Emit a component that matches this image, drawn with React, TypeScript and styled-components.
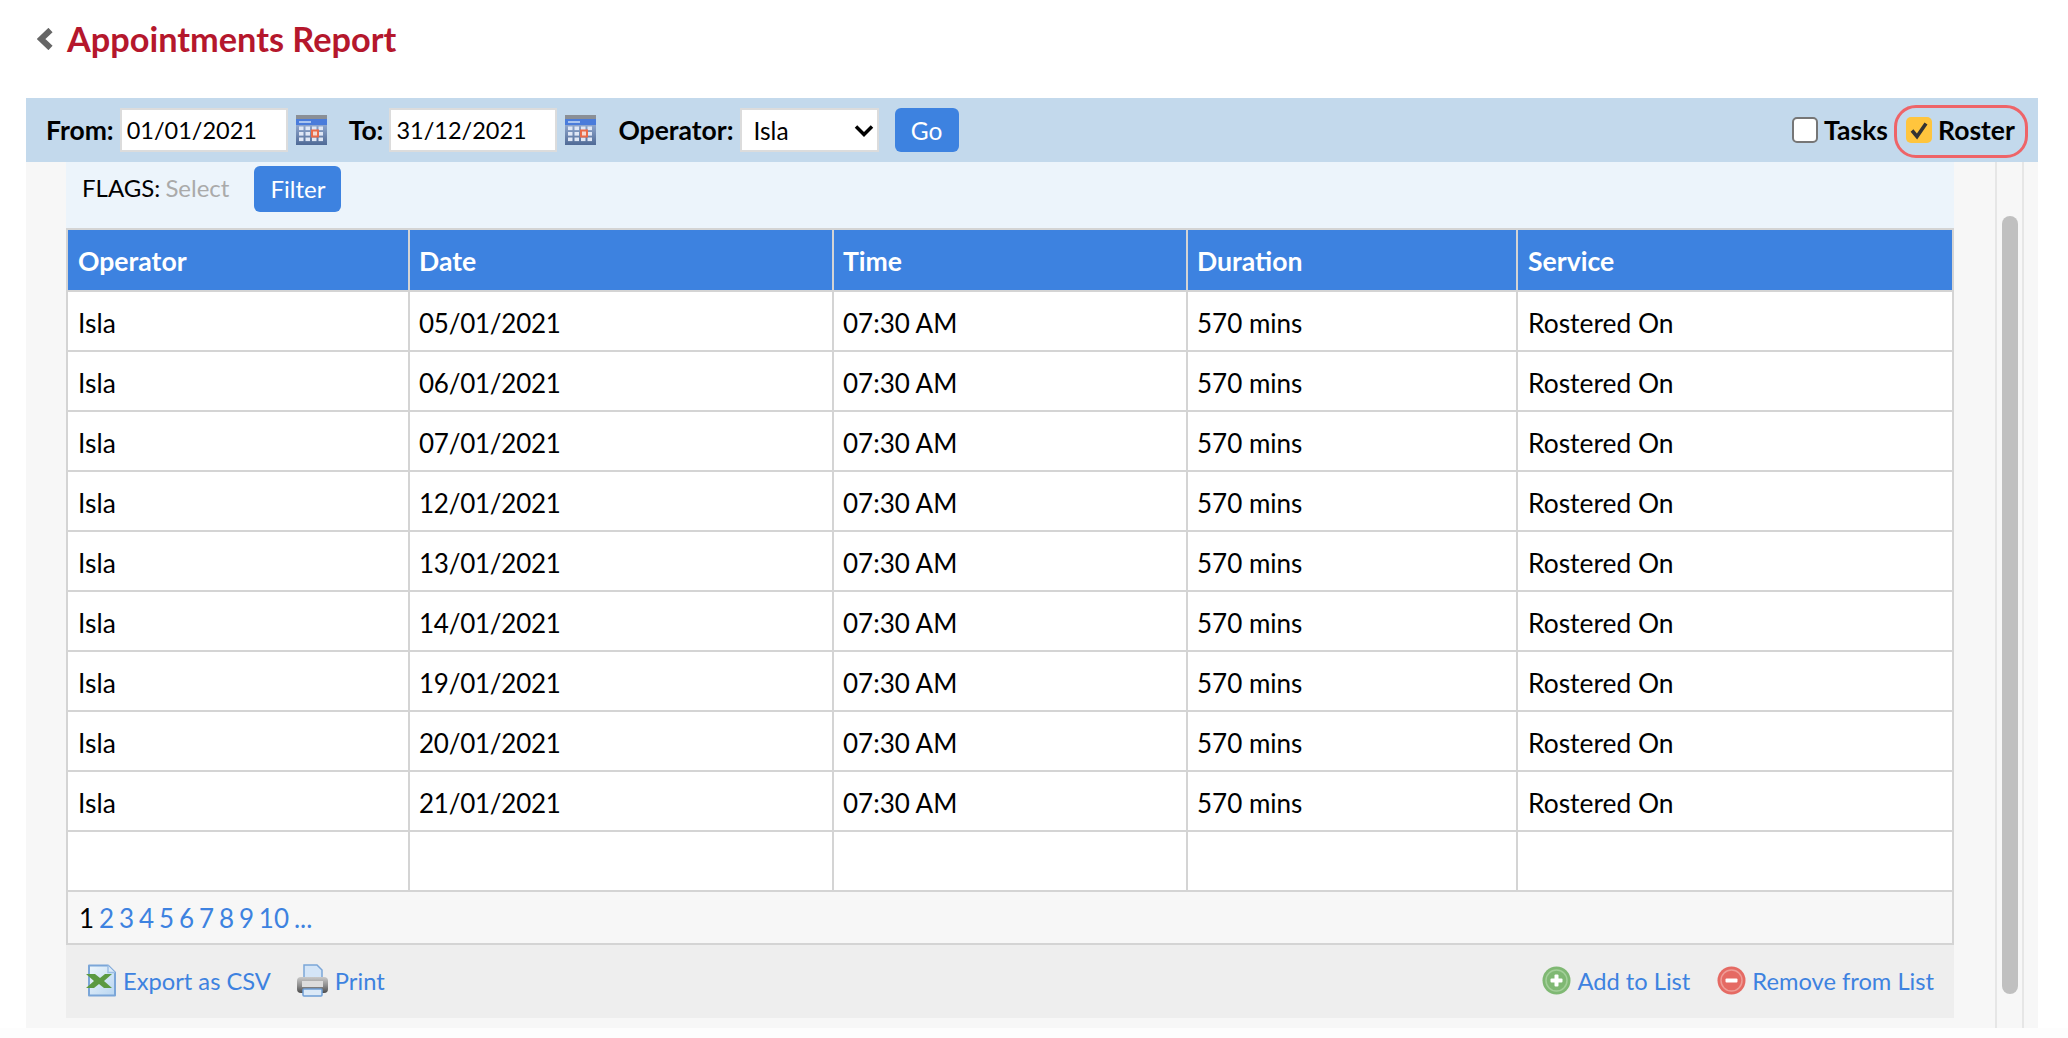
import React from "react";
import styled, { createGlobalStyle } from "styled-components";

const rows = [
  "05/01/2021",
  "06/01/2021",
  "07/01/2021",
  "12/01/2021",
  "13/01/2021",
  "14/01/2021",
  "19/01/2021",
  "20/01/2021",
  "21/01/2021",
];

const pages = ["2", "3", "4", "5", "6", "7", "8", "9", "10", "..."];

const CalendarIcon: React.FC = () => (
  <svg width="33" height="31" viewBox="0 0 33 31">
    <defs>
      <linearGradient id="calBody" x1="0" y1="0" x2="0" y2="1">
        <stop offset="0" stopColor="#a5bbdf" />
        <stop offset="1" stopColor="#4f6a96" />
      </linearGradient>
    </defs>
    <rect x="1" y="3" width="31" height="27" fill="url(#calBody)" />
    <rect x="1" y="0" width="31" height="4" fill="#8a8f96" />
    <rect x="1" y="4" width="31" height="6" fill="#4a7cdb" />
    <rect x="4" y="6" width="12" height="2" fill="#a9c4ef" />
    {[11.5, 17, 22.5].map((y) =>
      [4, 10.5, 17, 23.5].map((x) => (
        <rect key={`${x}-${y}`} x={x} y={y} width="4.5" height="3.6" fill="#dfe7f5" />
      ))
    )}
    <rect x="17" y="15.5" width="6" height="6" fill="#f4d8d0" stroke="#ea6a48" strokeWidth="2" />
  </svg>
);

const ExcelIcon: React.FC = () => (
  <svg width="31" height="33" viewBox="0 0 31 33">
    <defs>
      <linearGradient id="xlsDoc" x1="0" y1="0" x2="1" y2="1">
        <stop offset="0" stopColor="#eef6fc" />
        <stop offset="1" stopColor="#b9d6f1" />
      </linearGradient>
    </defs>
    <path
      d="M3 1.5h19l7 7v23H3z"
      fill="url(#xlsDoc)"
      stroke="#7ba6d8"
      strokeWidth="2"
      strokeLinejoin="round"
    />
    <path d="M22 1.5v7h7" fill="#dbeaf8" stroke="#9dbfe4" strokeWidth="1.5" />
    <path d="M0 10h9l5 4 5-4h7l-8 7 8 7h-8l-5-4-5 4H0l8-7z" fill="#5c9a42" />
  </svg>
);

const PrinterIcon: React.FC = () => (
  <svg width="33" height="33" viewBox="0 0 33 33">
    <defs>
      <linearGradient id="prnBody" x1="0" y1="0" x2="0" y2="1">
        <stop offset="0" stopColor="#c9c9c9" />
        <stop offset="0.55" stopColor="#8c8c8c" />
        <stop offset="1" stopColor="#4b4b4b" />
      </linearGradient>
    </defs>
    <path d="M8 16V1h13l5 5v10z" fill="#d4e5f7" stroke="#7ba6d8" strokeWidth="1.5" />
    <rect x="1" y="13" width="31" height="16" rx="4" fill="url(#prnBody)" />
    <rect x="6" y="17" width="21" height="6" fill="#dcdcdc" />
    <rect x="7" y="25" width="19" height="7" rx="1" fill="#dbe9f7" stroke="#6f9fd6" strokeWidth="1.5" />
  </svg>
);

const RoundIcon: React.FC<{ tone: "add" | "remove" }> = ({ tone }) => {
  const outer = tone === "add" ? "#7fb873" : "#e56a63";
  const rim = tone === "add" ? "#a3cf99" : "#ee9c96";
  return (
    <svg width="29" height="29" viewBox="0 0 29 29">
      <circle cx="14.5" cy="14.5" r="14" fill={outer} />
      <circle cx="14.5" cy="14.5" r="10.5" fill="none" stroke={rim} strokeWidth="1.5" />
      <rect x="8.5" y="12.5" width="12" height="4" rx="1" fill="#fff" />
      {tone === "add" && <rect x="12.5" y="8.5" width="4" height="12" rx="1" fill="#fff" />}
    </svg>
  );
};

const App: React.FC = () => (
  <Page>
    <GlobalStyle />
    <TitleRow>
      <BackIcon width="16" height="22" viewBox="0 0 16 22">
        <path d="M13.5 2 4 11l9.5 9" fill="none" stroke="#666" strokeWidth="6" />
      </BackIcon>
      <Title>Appointments Report</Title>
    </TitleRow>

    <Toolbar>
      <FieldLabel>From:</FieldLabel>
      <DateInput defaultValue="01/01/2021" />
      <CalendarSlot>
        <CalendarIcon />
      </CalendarSlot>
      <FieldLabel>To:</FieldLabel>
      <DateInput defaultValue="31/12/2021" />
      <CalendarSlot>
        <CalendarIcon />
      </CalendarSlot>
      <FieldLabel>Operator:</FieldLabel>
      <SelectWrap>
        <OperatorSelect defaultValue="Isla">
          <option>Isla</option>
        </OperatorSelect>
        <SelectArrow width="20" height="13" viewBox="0 0 20 13">
          <path d="M2 2.5 10 10.5l8-8" fill="none" stroke="#000" strokeWidth="3.5" />
        </SelectArrow>
      </SelectWrap>
      <GoButton>Go</GoButton>
      <ToolbarRight>
        <CheckLabel>
          <CheckBox type="checkbox" />
          Tasks
        </CheckLabel>
        <RosterRing>
          <CheckLabel>
            <CheckBox type="checkbox" defaultChecked />
            Roster
          </CheckLabel>
        </RosterRing>
      </ToolbarRight>
    </Toolbar>

    <Body>
      <Main>
        <FlagsBar>
          <FlagsLabel>
            FLAGS: <span>Select</span>
          </FlagsLabel>
          <FilterButton>Filter</FilterButton>
        </FlagsBar>
        <ReportTable>
          <colgroup>
            <col style={{ width: 342 }} />
            <col style={{ width: 424 }} />
            <col style={{ width: 354 }} />
            <col style={{ width: 330 }} />
            <col />
          </colgroup>
          <thead>
            <tr>
              <th>Operator</th>
              <th>Date</th>
              <th>Time</th>
              <th>Duration</th>
              <th>Service</th>
            </tr>
          </thead>
          <tbody>
            {rows.map((date) => (
              <tr key={date}>
                <td>Isla</td>
                <td>{date}</td>
                <td>07:30 AM</td>
                <td>570 mins</td>
                <td>Rostered On</td>
              </tr>
            ))}
            <tr>
              <td />
              <td />
              <td />
              <td />
              <td />
            </tr>
          </tbody>
        </ReportTable>
        <Pager>
          <b>1</b>
          {pages.map((p) => (
            <PageLink key={p}>{p}</PageLink>
          ))}
        </Pager>
        <Footer>
          <FooterLink>
            <ExcelIcon />
            Export as CSV
          </FooterLink>
          <FooterLink>
            <PrinterIcon />
            Print
          </FooterLink>
          <FooterRight>
            <FooterLink>
              <RoundIcon tone="add" />
              Add to List
            </FooterLink>
            <FooterLink>
              <RoundIcon tone="remove" />
              Remove from List
            </FooterLink>
          </FooterRight>
        </Footer>
      </Main>
      <ScrollRail>
        <ScrollThumb />
      </ScrollRail>
    </Body>
  </Page>
);

const GlobalStyle = createGlobalStyle`
  html, body {
    margin: 0;
    padding: 0;
    background: #fdfdfd;
    overflow: hidden;
  }
  * {
    box-sizing: border-box;
  }
  body {
    font-family: Lato, "Open Sans", sans-serif;
    color: #000;
  }
`;

const Page = styled.div`
  width: 2068px;
  height: 1038px;
  padding: 0 30px 0 26px;
  background: linear-gradient(#fff 1028px, #fdfdfd 1028px);
`;

const TitleRow = styled.div`
  height: 98px;
  padding: 0 0 21px 11px;
  display: flex;
  align-items: center;
  gap: 14px;
`;

const BackIcon = styled.svg`
  flex: none;
`;

const Title = styled.h1`
  margin: 0;
  font-size: 34.3px;
  font-weight: 700;
  color: #b5172c;
`;

const Toolbar = styled.div`
  height: 64px;
  padding: 0 10px 0 20px;
  background: #c3d9ec;
  display: flex;
  align-items: center;
`;

const FieldLabel = styled.label`
  font-size: 26.5px;
  font-weight: 700;
  margin-right: 6px;
`;

const DateInput = styled.input`
  width: 168px;
  height: 44px;
  padding: 0 5px;
  border: 2px solid #dcdcdc;
  background: #fff;
  font-family: inherit;
  font-size: 23.5px;
  color: #000;
  outline: none;
`;

const CalendarSlot = styled.span`
  width: 61px;
  padding-left: 7px;
  display: flex;
  align-items: center;
  svg {
    filter: blur(0.5px);
  }
`;

const SelectWrap = styled.div`
  position: relative;
  width: 139px;
  height: 44px;
  margin-right: 16px;
`;

const OperatorSelect = styled.select`
  width: 100%;
  height: 100%;
  padding: 0 12px;
  appearance: none;
  border: 2px solid #dcdcdc;
  border-radius: 0;
  background: #fff;
  font-family: inherit;
  font-size: 24.5px;
  color: #000;
`;

const SelectArrow = styled.svg`
  position: absolute;
  right: 5px;
  top: 16px;
  pointer-events: none;
`;

const GoButton = styled.button`
  width: 64px;
  height: 44px;
  padding: 0;
  border: none;
  border-radius: 6px;
  background: #3d82e0;
  color: #fff;
  font-family: inherit;
  font-size: 24.5px;
`;

const ToolbarRight = styled.div`
  margin-left: auto;
  display: flex;
  align-items: center;
  gap: 6px;
`;

const CheckLabel = styled.label`
  display: flex;
  align-items: center;
  gap: 6px;
  font-size: 26.5px;
  font-weight: 700;
`;

const CheckBox = styled.input`
  appearance: none;
  width: 26px;
  height: 26px;
  margin: 0;
  border: 2px solid #767676;
  border-radius: 5px;
  background: #fff;
  &:checked {
    border: none;
    background: #ffc53d
      url("data:image/svg+xml,%3Csvg xmlns='http://www.w3.org/2000/svg' viewBox='0 0 26 26'%3E%3Cpath d='M6 13.5l5 6 9-13' fill='none' stroke='%23333' stroke-width='3.6'/%3E%3C/svg%3E")
      center / 100% no-repeat;
  }
`;

const RosterRing = styled.div`
  width: 134px;
  height: 53px;
  margin-top: 2px;
  padding: 0 0 2px 9px;
  border: 3.5px solid #ee6468;
  border-radius: 22px;
  display: flex;
  align-items: center;
`;

const Body = styled.div`
  height: 866px;
  background: #f7f7f7;
  padding-left: 40px;
  display: flex;
`;

const Main = styled.div`
  width: 1888px;
  height: 856px;
  display: flex;
  flex-direction: column;
`;

const FlagsBar = styled.div`
  height: 66px;
  padding: 0 0 0 16px;
  background: #ecf4fb;
  display: flex;
  align-items: flex-start;
  gap: 25px;
`;

const FlagsLabel = styled.div`
  height: 52px;
  line-height: 52px;
  font-size: 24px;
  word-spacing: -1px;
  span {
    color: #aaa;
  }
`;

const FilterButton = styled.button`
  width: 87px;
  height: 46px;
  margin-top: 4px;
  padding: 0 0 2px;
  border: none;
  border-radius: 6px;
  background: #3d82e0;
  color: #fff;
  font-family: inherit;
  font-size: 24px;
`;

const ReportTable = styled.table`
  width: 1888px;
  table-layout: fixed;
  border-collapse: collapse;
  background: #fff;
  font-size: 26px;
  th,
  td {
    height: 60px;
    padding: 3px 0 0 9px;
    border: 2px solid #d4d4d4;
    text-align: left;
    font-weight: 400;
  }
  th {
    height: 62px;
    padding-top: 1px;
    background: #3d82e0;
    color: #fff;
    font-size: 26.6px;
    font-weight: 700;
  }
  th:first-child,
  td:first-child,
  th:last-child,
  td:last-child {
    padding-left: 10px;
  }
  td:first-child,
  td:last-child {
    font-size: 26.4px;
  }
  td:nth-child(2) {
    letter-spacing: -0.25px;
  }
`;

const Pager = styled.div`
  height: 53px;
  padding: 0 0 0 11px;
  border: 2px solid #d4d4d4;
  border-top: none;
  width: 1888px;
  background: #f7f7f7;
  display: flex;
  align-items: center;
  gap: 4.9px;
  font-size: 26px;
  b {
    font-weight: 400;
  }
`;

const PageLink = styled.a`
  color: #3d82e0;
`;

const Footer = styled.div`
  flex: 1;
  padding: 0 20px 2px 20px;
  background: #eeeeee;
  display: flex;
  align-items: center;
  gap: 25px;
`;

const FooterLink = styled.a`
  display: flex;
  align-items: center;
  gap: 6px;
  font-size: 23.7px;
  color: #3d82e0;
  svg {
    filter: blur(0.5px);
  }
`;

const FooterRight = styled.div`
  margin-left: auto;
  display: flex;
  align-items: center;
  gap: 27px;
`;

const ScrollRail = styled.div`
  width: 29px;
  margin-left: 41px;
  padding: 54px 6px 34px 5px;
  border-left: 2px solid #e6e6e6;
  border-right: 2px solid #e6e6e6;
  background: #f7f7f7;
`;

const ScrollThumb = styled.div`
  width: 16px;
  height: 100%;
  border-radius: 8px;
  background: #c0c0c0;
`;

export default App;
